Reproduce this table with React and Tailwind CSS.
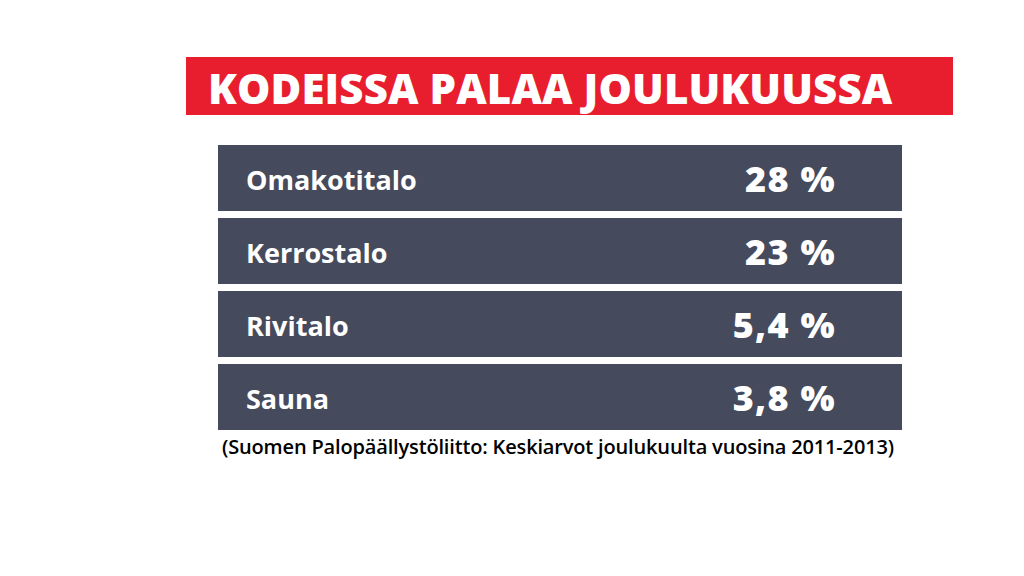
import React from "react";

const rows = [
  { label: "Omakotitalo", value: "28 %" },
  { label: "Kerrostalo", value: "23 %" },
  { label: "Rivitalo", value: "5,4 %" },
  { label: "Sauna", value: "3,8 %" },
];

export default function App() {
  return (
    <div
      className="w-[1024px] h-[576px] bg-white overflow-hidden"
      style={{ fontFamily: "'Open Sans', 'Liberation Sans', sans-serif" }}
    >
      <div className="pt-[57px] pl-[186px]">
        <div className="w-[767px] h-[58px] bg-[#e81e2e] flex items-center pl-[22px]">
          <h1 className="text-white text-[42px] font-extrabold leading-none tracking-[0.1px] mt-[3px]">
            KODEISSA PALAA JOULUKUUSSA
          </h1>
        </div>
      </div>

      <div className="ml-[218px] mt-[30px] w-[684px] flex flex-col gap-[7px]">
        {rows.map((row) => (
          <div
            key={row.label}
            className="h-[66px] bg-[#454a5c] flex items-center justify-between pl-[28px] pr-[66px]"
          >
            <span className="text-white text-[27px] font-bold mt-[4px]">{row.label}</span>
            <span className="text-white text-[36px] font-extrabold tracking-[1.3px] mt-[2px]">{row.value}</span>
          </div>
        ))}
      </div>

      <p className="ml-[222px] mt-[4px] text-[20px] leading-tight font-semibold text-black tracking-[-0.16px]">
        (Suomen Palopäällystöliitto: Keskiarvot joulukuulta vuosina 2011-2013)
      </p>
    </div>
  );
}
